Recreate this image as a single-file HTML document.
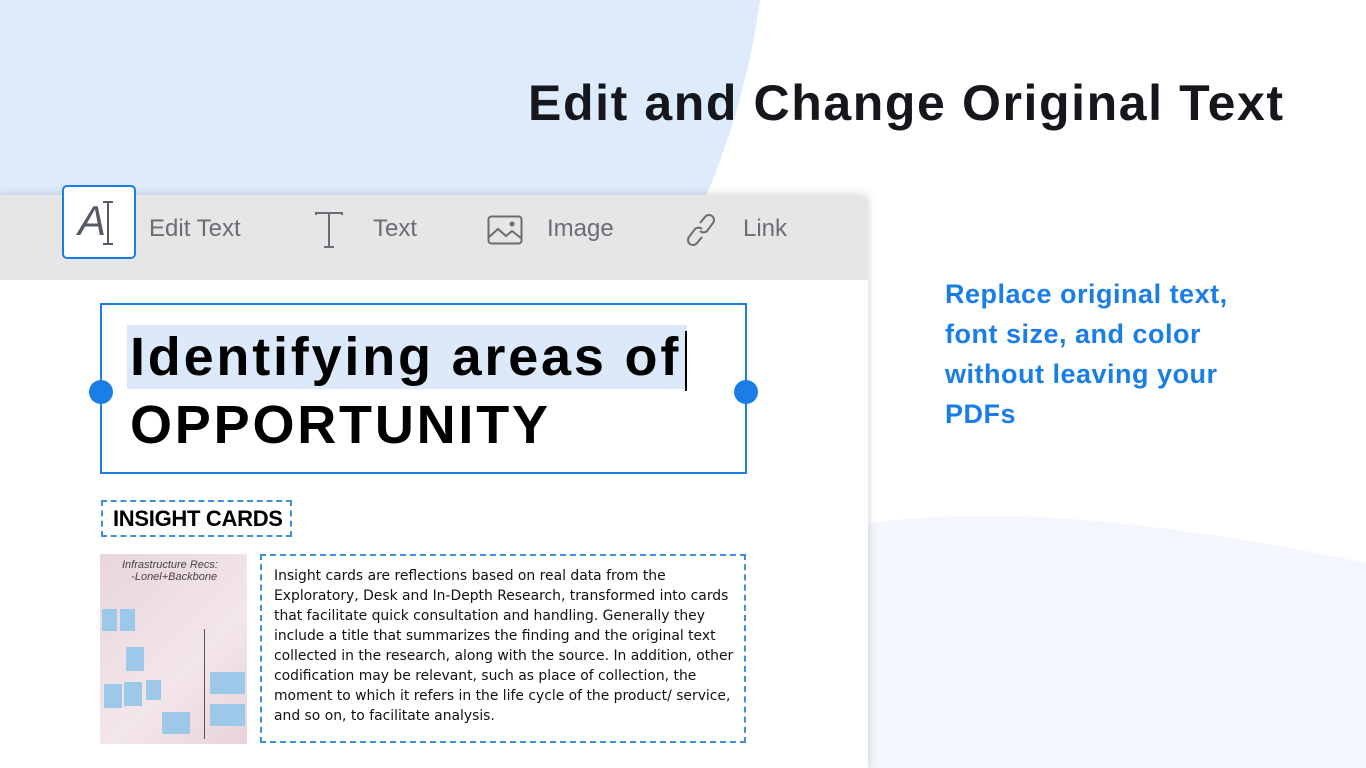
<!DOCTYPE html>
<html><head><meta charset="utf-8"><style>
*{margin:0;padding:0;box-sizing:border-box}
html,body{width:1366px;height:768px;overflow:hidden}
body{background:#fff;font-family:"Liberation Sans",sans-serif}
#w{position:relative;width:1366px;height:768px;overflow:hidden}
h1{position:absolute;left:528px;top:74px;font-size:50px;font-weight:bold;color:#15171c;letter-spacing:1.6px;white-space:nowrap}
.side{position:absolute;left:945px;top:274px;font-size:27px;line-height:40px;font-weight:bold;color:#1a7ee6;letter-spacing:.5px}
.doc{position:absolute;left:0;top:195px;width:868px;height:573px;background:#fff;box-shadow:0 0 10px rgba(0,0,0,.18);border-radius:0 8px 0 0}
.tb{height:85px;background:#e6e6e6;position:relative;border-radius:0 8px 0 0}
.tb span{position:absolute;top:20px;font-size:24px;color:#6a6d75}
.ai{position:absolute;left:62px;top:-10px;width:74px;height:74px;border:2px solid #1a7ee6;border-radius:5px;background:#fff}
.sel{position:absolute;left:100px;top:108px;width:647px;height:171px;border:2px solid #1a7ee6}
.hl{position:absolute;left:127px;top:130px;width:560px;height:64px;background:#dce9fb}
.big{position:absolute;left:130px;top:128px;font-size:54px;font-weight:bold;line-height:68px;letter-spacing:2.8px;color:#000;white-space:nowrap}
.dot{position:absolute;width:24px;height:24px;border-radius:50%;background:#1a7ee6}
.ic{position:absolute;left:101px;top:305px;width:191px;height:37px;border:2px dashed #3f8fe0;font-size:22px;font-weight:bold;padding:4px 0 0 10px;letter-spacing:-.3px}
.img{position:absolute;left:100px;top:359px;width:147px;height:190px;background:linear-gradient(135deg,#e8d6dc,#f3e6ea 60%,#e7d3d9);overflow:hidden}
.txt{position:absolute;left:260px;top:359px;width:486px;height:189px;border:2px dashed #3f8fe0;padding:10px 4px 10px 12px;font-family:"DejaVu Sans",sans-serif;font-size:13.9px;line-height:20px;color:#111}
.n{position:absolute;background:#9cc9ea}
</style></head><body><div id="w">
<svg style="position:absolute;left:0;top:0" width="1366" height="768"><path d="M0 0H760Q745 110 700 210L0 210Z" fill="#deebfc"/><path d="M860 525Q1040 495 1366 563V768H860Z" fill="#f3f6fd"/></svg>
<h1>Edit and Change Original Text</h1>
<div class="side">Replace original text,<br>font size, and color<br>without leaving your<br>PDFs</div>
<div class="doc">
<div class="tb">
<div class="ai"><span style="left:14px;top:10px;font-size:42px;color:#555a66;font-style:italic">A</span><svg style="position:absolute;left:38px;top:14px" width="12" height="44"><path d="M1 1h10M6 1v42M1 43h10" stroke="#555a66" stroke-width="2" fill="none"/></svg></div>
<span style="left:149px">Edit Text</span>
<svg style="position:absolute;left:314px;top:17px" width="30" height="36"><path d="M2 3V1h26v2M15 1v34M10 35h10" stroke="#6a6d75" stroke-width="2" fill="none"/></svg>
<span style="left:373px">Text</span>
<svg style="position:absolute;left:487px;top:20px" width="36" height="30"><rect x="1.5" y="1.5" width="33" height="27" rx="3" stroke="#6a6d75" stroke-width="2" fill="none"/><path d="M2 22l9-8 8 7 6-5 9 7" stroke="#6a6d75" stroke-width="2" fill="none"/><circle cx="25" cy="9" r="2.5" fill="#6a6d75"/></svg>
<span style="left:547px">Image</span>
<svg style="position:absolute;left:686px;top:18px" width="30" height="34"><path d="M14 10l5-6a5 5 0 0 1 8 6l-6 8a5 5 0 0 1-7 0M16 24l-5 6a5 5 0 0 1-8-6l6-8a5 5 0 0 1 7 0" stroke="#6a6d75" stroke-width="2" fill="none"/></svg>
<span style="left:743px">Link</span>
</div>
<div class="sel"></div><div class="hl"></div>
<div class="big">Identifying areas of<span style="display:inline-block;width:2px;height:60px;background:#000;vertical-align:middle;margin-left:4px"></span><br>OPPORTUNITY</div>
<div class="dot" style="left:89px;top:185px"></div><div class="dot" style="left:734px;top:185px"></div>
<div class="ic">INSIGHT CARDS</div>
<div class="img">
<div class="n" style="left:2px;top:55px;width:15px;height:22px"></div><div class="n" style="left:20px;top:55px;width:15px;height:22px"></div>
<div class="n" style="left:26px;top:93px;width:18px;height:24px"></div>
<div class="n" style="left:4px;top:130px;width:18px;height:24px"></div><div class="n" style="left:24px;top:128px;width:18px;height:24px"></div><div class="n" style="left:46px;top:126px;width:15px;height:20px"></div>
<div class="n" style="left:110px;top:118px;width:35px;height:22px"></div><div class="n" style="left:110px;top:150px;width:35px;height:22px"></div>
<div class="n" style="left:62px;top:158px;width:28px;height:22px"></div>
<div style="position:absolute;left:104px;top:75px;width:1px;height:110px;background:#555"></div>
<div style="position:absolute;left:22px;top:5px;font:italic 11px 'Liberation Sans';color:#444;white-space:nowrap">Infrastructure Recs:<br>&nbsp;&nbsp;&nbsp;-Lonel+Backbone</div>
</div>
<div class="txt">Insight cards are reflections based on real data from the Exploratory, Desk and In-Depth Research, transformed into cards that facilitate quick consultation and handling. Generally they include a title that summarizes the finding and the original text collected in the research, along with the source. In addition, other codification may be relevant, such as place of collection, the moment to which it refers in the life cycle of the product/ service, and so on, to facilitate analysis.</div>
</div>
</div></body></html>
